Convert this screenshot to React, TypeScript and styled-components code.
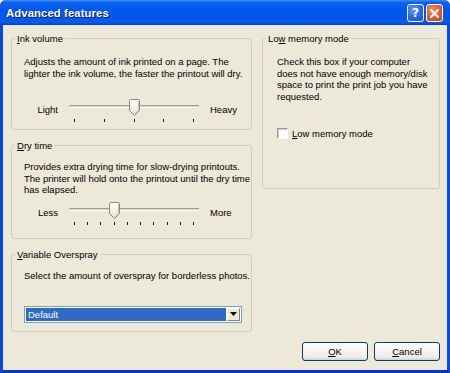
import React from "react";
import styled, { createGlobalStyle } from "styled-components";

const GlobalStyle = createGlobalStyle`
  html, body {
    margin: 0;
    padding: 0;
    background: #ffffff;
  }
  body {
    font-family: "Liberation Sans", Arial, sans-serif;
  }
`;

type SliderProps = {
  left: string;
  right: string;
  ticks: number;
  value: number;
  top: number;
};

const Slider = ({ left, right, ticks, value, top }: SliderProps) => {
  const thumbLeft = 5 + (value / (ticks - 1)) * 120 - 5.5;
  return (
    <SliderRow $mt={top}>
      <SliderLabel $align="right">{left}</SliderLabel>
      <TrackArea>
        <Groove />
        <TickRow>
          {Array.from({ length: ticks }).map((_, i) => (
            <Tick key={i} />
          ))}
        </TickRow>
        <Thumb style={{ left: thumbLeft }}>
          <svg width="11" height="17" viewBox="0 0 11 17">
            <defs>
              <linearGradient id="thumbFill" x1="0" y1="0" x2="0" y2="1">
                <stop offset="0" stopColor="#ffffff" />
                <stop offset="1" stopColor="#e6e4da" />
              </linearGradient>
            </defs>
            <path
              d="M0.5 1.5 Q0.5 0.5 1.5 0.5 H9.5 Q10.5 0.5 10.5 1.5 V11.5 L5.5 16.5 L0.5 11.5 Z"
              fill="url(#thumbFill)"
              stroke="#8d8b7e"
            />
            <path d="M9.5 1.5 V11 L5.5 15" fill="none" stroke="#c5c2b2" />
          </svg>
        </Thumb>
      </TrackArea>
      <SliderLabel $align="left">{right}</SliderLabel>
    </SliderRow>
  );
};

const App = () => {
  return (
    <>
      <GlobalStyle />
      <Window>
        <TitleBar>
          <Title>Advanced features</Title>
          <CaptionButtons>
            <HelpButton>?</HelpButton>
            <CloseButton>
              <svg width="9" height="9" viewBox="0 0 9 9">
                <path d="M1 1 L8 8 M8 1 L1 8" stroke="#ffffff" strokeWidth="2" strokeLinecap="square" />
              </svg>
            </CloseButton>
          </CaptionButtons>
        </TitleBar>
        <Client>
          <Columns>
            <Column>
              <Group $h={97}>
                <Legend>
                  <u>I</u>nk volume
                </Legend>
                <GroupBody $pt={12} $pl={12}>
                  <Description>
                    Adjusts the amount of ink printed on a page. The
                    <br />
                    lighter the ink volume, the faster the printout will dry.
                  </Description>
                  <Slider left="Light" right="Heavy" ticks={5} value={2} top={20} />
                </GroupBody>
              </Group>
              <Group $h={99}>
                <Legend>
                  <u>D</u>ry time
                </Legend>
                <GroupBody $pt={10} $pl={12}>
                  <Description>
                    Provides extra drying time for slow-drying printouts.
                    <br />
                    The printer will hold onto the printout until the dry time
                    <br />
                    has elapsed.
                  </Description>
                  <Slider left="Less" right="More" ticks={10} value={3} top={6} />
                </GroupBody>
              </Group>
              <Group $h={83}>
                <Legend>
                  <u>V</u>ariable Overspray
                </Legend>
                <GroupBody $pt={10} $pl={12}>
                  <Description>Select the amount of overspray for borderless photos.</Description>
                  <Select>
                    <SelectValue>Default</SelectValue>
                    <SelectArrow>
                      <svg width="7" height="4" viewBox="0 0 7 4">
                        <path d="M0 0 H7 L3.5 4 Z" fill="#000000" />
                      </svg>
                    </SelectArrow>
                  </Select>
                </GroupBody>
              </Group>
            </Column>
            <Column>
              <Group $h={156}>
                <Legend>
                  Lo<u>w</u> memory mode
                </Legend>
                <GroupBody $pt={12} $pl={14}>
                  <Description>
                    Check this box if your computer
                    <br />
                    does not have enough memory/disk
                    <br />
                    space to print the print job you have
                    <br />
                    requested.
                  </Description>
                  <CheckRow>
                    <CheckBox />
                    <span>
                      <u>L</u>ow memory mode
                    </span>
                  </CheckRow>
                </GroupBody>
              </Group>
            </Column>
          </Columns>
          <Footer>
            <Button>
              <u>O</u>K
            </Button>
            <Button>
              <u>C</u>ancel
            </Button>
          </Footer>
        </Client>
      </Window>
    </>
  );
};

const Window = styled.div`
  width: 450px;
  height: 373px;
  display: flex;
  flex-direction: column;
  box-sizing: border-box;
  border-radius: 6px 6px 0 0;
  overflow: hidden;
  background: #0831d9;
`;

const TitleBar = styled.div`
  height: 25px;
  flex: none;
  display: flex;
  align-items: center;
  justify-content: space-between;
  padding: 1px 7px 0 6px;
  box-sizing: border-box;
  background: linear-gradient(
    to bottom,
    #3c8efc 0%,
    #0d61f0 10%,
    #0058ee 35%,
    #0157e8 70%,
    #0a5cf0 88%,
    #0042cc 100%
  );
`;

const Title = styled.div`
  color: #ffffff;
  font-weight: bold;
  font-size: 11.3px;
  text-shadow: 1px 1px 0 #0a1c7a;
  letter-spacing: 0.1px;
`;

const CaptionButtons = styled.div`
  display: flex;
  gap: 2px;
`;

const CaptionButton = styled.div`
  width: 17px;
  height: 18px;
  box-sizing: border-box;
  border: 1px solid #ffffff;
  border-radius: 3px;
  display: flex;
  align-items: center;
  justify-content: center;
  color: #ffffff;
`;

const HelpButton = styled(CaptionButton)`
  background: radial-gradient(circle at 35% 30%, #5c98ff 0%, #2866ea 55%, #1a4fd0 100%);
  font-family: "DejaVu Sans", sans-serif;
  font-weight: bold;
  font-size: 12px;
`;

const CloseButton = styled(CaptionButton)`
  background: radial-gradient(circle at 35% 30%, #f08a66 0%, #e05a34 55%, #c8401c 100%);
`;

const Client = styled.div`
  flex: 1;
  display: flex;
  flex-direction: column;
  background: #ece9d8;
  border: 3px solid #0649e0;
  border-top: none;
  border-bottom-color: #0a35c8;
`;

const Columns = styled.div`
  display: grid;
  grid-template-columns: 241px 178px;
  column-gap: 10px;
  padding: 8px 0 0 8px;
  align-items: start;
`;

const Column = styled.div`
  display: flex;
  flex-direction: column;
  gap: 10px;
`;

const Group = styled.fieldset<{ $h: number }>`
  margin: 0;
  min-width: 0;
  box-sizing: border-box;
  height: ${(p) => p.$h}px;
  padding: 0;
  border: 1px solid #d0d0bf;
  border-radius: 3px;
  font-size: 9.5px;
  line-height: 11.5px;
  color: #000000;
`;

const Legend = styled.legend`
  padding: 0 2px;
  margin-left: 3px;
  font-size: 9.5px;
  line-height: 11px;
  color: #000000;
`;

const GroupBody = styled.div<{ $pt: number; $pl: number }>`
  padding: ${(p) => p.$pt}px 8px 0 ${(p) => p.$pl}px;
`;

const Description = styled.div`
  white-space: nowrap;
`;

const SliderRow = styled.div<{ $mt: number }>`
  display: grid;
  grid-template-columns: 34px 130px auto;
  column-gap: 11px;
  margin-top: ${(p) => p.$mt}px;
`;

const SliderLabel = styled.div<{ $align: "left" | "right" }>`
  padding-top: 5px;
  text-align: ${(p) => p.$align};
`;

const TrackArea = styled.div`
  position: relative;
  height: 24px;
  display: flex;
  flex-direction: column;
`;

const Groove = styled.div`
  margin-top: 6px;
  height: 3px;
  box-sizing: border-box;
  border-top: 1px solid #a3a18f;
  border-bottom: 1px solid #ffffff;
  background: #d6d3c4;
`;

const TickRow = styled.div`
  margin-top: 11px;
  padding: 0 5px;
  display: flex;
  justify-content: space-between;
`;

const Tick = styled.div`
  width: 1px;
  height: 3px;
  background: #1a1a1a;
`;

const Thumb = styled.div`
  position: absolute;
  top: 0;
  width: 11px;
  height: 17px;
  line-height: 0;
`;

const Select = styled.div`
  margin-top: 24px;
  width: 218px;
  height: 17px;
  box-sizing: border-box;
  border: 1px solid #7f9db9;
  background: #ffffff;
  display: flex;
  padding: 1px;
  gap: 1px;
`;

const SelectValue = styled.div`
  flex: 1;
  background: #316ac5;
  color: #ffffff;
  padding-left: 2px;
  line-height: 13px;
`;

const SelectArrow = styled.div`
  width: 13px;
  box-sizing: border-box;
  border: 1px solid;
  border-color: #ffffff #808080 #808080 #ffffff;
  background: #ece9d8;
  display: flex;
  align-items: center;
  justify-content: center;
`;

const CheckRow = styled.div`
  margin-top: 26px;
  display: flex;
  align-items: center;
  gap: 4px;
`;

const CheckBox = styled.div`
  width: 11px;
  height: 11px;
  box-sizing: border-box;
  background: #ffffff;
  border: 1px solid;
  border-color: #9a9a90 #ffffff #ffffff #9a9a90;
  box-shadow: inset 1px 1px 0 #d4d0c8;
`;

const Footer = styled.div`
  margin-top: auto;
  display: flex;
  justify-content: flex-end;
  gap: 6px;
  padding: 0 7px 9px 0;
`;

const Button = styled.div`
  width: 66px;
  height: 19px;
  box-sizing: border-box;
  border: 1px solid #003c74;
  border-radius: 3px;
  background: linear-gradient(to bottom, #ffffff 0%, #f4f3ee 50%, #ecebe4 85%, #d6d0c5 100%);
  display: flex;
  align-items: center;
  justify-content: center;
  font-size: 9.5px;
  color: #000000;
`;

export default App;
